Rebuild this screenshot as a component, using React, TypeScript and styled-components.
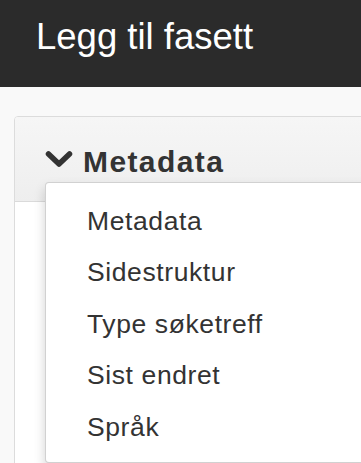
import React from "react";
import styled, { createGlobalStyle } from "styled-components";

const Global = createGlobalStyle`
  html, body {
    margin: 0;
    padding: 0;
    overflow: hidden;
    background: #f9f9f9;
    font-family: "Liberation Sans", Arial, Helvetica, sans-serif;
    color: #333;
  }
`;

const Page = styled.div`
  width: 361px;
  height: 463px;
  overflow: hidden;
  background: #f9f9f9;
`;

const Header = styled.header`
  height: 87px;
  box-sizing: border-box;
  background: #2b2b2b;
  padding: 17px 0 0 36px;
`;

const Title = styled.h1`
  margin: 0;
  font-size: 36.5px;
  line-height: 40px;
  font-weight: normal;
  color: #fff;
`;

const Panel = styled.section`
  position: relative;
  margin: 29px -60px 0 14px;
  border: 1px solid #dcdcdc;
  border-radius: 4px;
  background: #fff;
`;

const PanelHeading = styled.div`
  height: 85px;
  box-sizing: border-box;
  padding: 29px 0 0 30px;
  border-bottom: 1px solid #dadada;
  border-radius: 3px 3px 0 0;
  background: linear-gradient(to bottom, #f6f6f6 0%, #eeeeee 100%);
`;

const HeadingTitle = styled.h2`
  margin: 0;
  display: flex;
  align-items: center;
  gap: 10px;
  font-size: 30px;
  line-height: 32px;
  font-weight: bold;
  letter-spacing: 1.4px;
  color: #333;
`;

const Chevron = styled.svg`
  flex: none;
  width: 28px;
  height: 18px;
  margin-bottom: 7px;
`;

const PanelBody = styled.div`
  height: 300px;
`;

const Menu = styled.ul`
  position: absolute;
  top: 65px;
  left: 30px;
  width: 400px;
  margin: 0;
  padding: 12.5px 0 9px;
  list-style: none;
  background: #fff;
  border: 1px solid rgba(0, 0, 0, 0.18);
  border-radius: 4px;
  box-shadow: 0 6px 12px rgba(0, 0, 0, 0.175);
`;

const MenuItem = styled.li`
  padding: 8px 0 8px 41px;
  font-size: 26.5px;
  line-height: 35.5px;
  letter-spacing: 0.6px;
  color: #333;
  white-space: nowrap;
`;

const items = ["Metadata", "Sidestruktur", "Type søketreff", "Sist endret", "Språk"];

export default function App() {
  return (
    <Page>
      <Global />
      <Header>
        <Title>Legg til fasett</Title>
      </Header>
      <Panel>
        <PanelHeading>
          <HeadingTitle>
            <Chevron viewBox="0 0 28 18" aria-hidden="true">
              <path
                d="M3.5 4 L14 14 L24.5 4"
                fill="none"
                stroke="#333"
                strokeWidth="5.5"
                strokeLinecap="round"
                strokeLinejoin="round"
              />
            </Chevron>
            Metadata
          </HeadingTitle>
        </PanelHeading>
        <PanelBody />
        <Menu>
          {items.map((t) => (
            <MenuItem key={t}>{t}</MenuItem>
          ))}
        </Menu>
      </Panel>
    </Page>
  );
}
